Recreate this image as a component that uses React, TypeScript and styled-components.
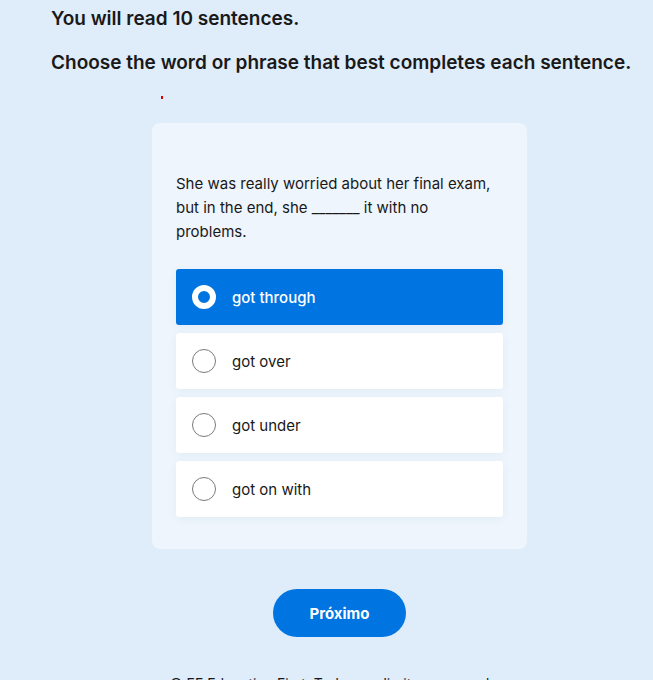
import React, { useState } from "react";
import styled, { createGlobalStyle } from "styled-components";

const Global = createGlobalStyle`
  html, body { margin: 0; padding: 0; background: #dfecfa; }
  body { font-family: Inter, "Noto Sans", sans-serif; color: #191919; }
  * { box-sizing: border-box; }
`;

const Page = styled.div`
  width: 653px;
  min-height: 680px;
  padding-left: 26px;
  display: flex;
  flex-direction: column;
  align-items: center;
  overflow: hidden;
`;

const Intro = styled.div`
  align-self: stretch;
  padding: 7px 0 0 25px;
  display: flex;
  flex-direction: column;
`;

const Title = styled.h1`
  margin: 0;
  font-size: 19px;
  line-height: 24px;
  font-weight: 600;
  white-space: nowrap;
`;

const Subtitle = styled.h2`
  margin: 20px 0 0;
  font-size: 19px;
  line-height: 24px;
  font-weight: 600;
  white-space: nowrap;
`;

const Marker = styled.span`
  width: 2px;
  height: 3px;
  background: #e00000;
  margin: 21px 0 0 110px;
`;

const Card = styled.section`
  margin-top: 24px;
  width: 375px;
  background: #eef5fd;
  border-radius: 8px;
  padding: 49px 24px 32px;
  display: flex;
  flex-direction: column;
`;

const Question = styled.p`
  margin: 0;
  max-width: 320px;
  font-size: 15px;
  line-height: 24px;
  color: #191919;
`;

const Options = styled.div`
  margin-top: 25px;
  display: flex;
  flex-direction: column;
  gap: 8px;
`;

const Option = styled.button<{ $selected: boolean }>`
  height: 56px;
  display: flex;
  align-items: center;
  gap: 16px;
  padding: 0 16px;
  border: none;
  border-radius: 3px;
  background: ${(p) => (p.$selected ? "#0074e0" : "#ffffff")};
  color: ${(p) => (p.$selected ? "#ffffff" : "#191919")};
  box-shadow: 0 2px 10px rgba(40, 80, 140, 0.06);
  font-family: inherit;
  font-size: 15px;
  font-weight: ${(p) => (p.$selected ? 500 : 400)};
  text-align: left;
  cursor: pointer;
`;

const Radio = styled.span<{ $selected: boolean }>`
  width: 24px;
  height: 24px;
  border-radius: 50%;
  flex: none;
  background: ${(p) => (p.$selected ? "#0074e0" : "#ffffff")};
  border: ${(p) => (p.$selected ? "6px solid #ffffff" : "1px solid #7a7a7a")};
`;

const Next = styled.button`
  margin-top: 40px;
  width: 133px;
  height: 48px;
  border: none;
  border-radius: 24px;
  background: #0074e0;
  color: #ffffff;
  font-family: inherit;
  font-size: 15px;
  font-weight: 700;
  cursor: pointer;
`;

const Footer = styled.footer`
  margin-top: 37px;
  font-size: 14px;
  line-height: 20px;
  color: #191919;
  white-space: nowrap;
`;

const options = ["got through", "got over", "got under", "got on with"];

export default function App() {
  const [selected, setSelected] = useState(0);
  return (
    <Page>
      <Global />
      <Intro>
        <Title>You will read 10 sentences.</Title>
        <Subtitle>Choose the word or phrase that best completes each sentence.</Subtitle>
        <Marker />
      </Intro>
      <Card>
        <Question>
          She was really worried about her final exam, but in the end, she _______ it with no problems.
        </Question>
        <Options>
          {options.map((o, i) => (
            <Option key={o} $selected={selected === i} onClick={() => setSelected(i)}>
              <Radio $selected={selected === i} />
              {o}
            </Option>
          ))}
        </Options>
      </Card>
      <Next>Próximo</Next>
      <Footer>© EF Education First. Todos os direitos reservados.</Footer>
    </Page>
  );
}
